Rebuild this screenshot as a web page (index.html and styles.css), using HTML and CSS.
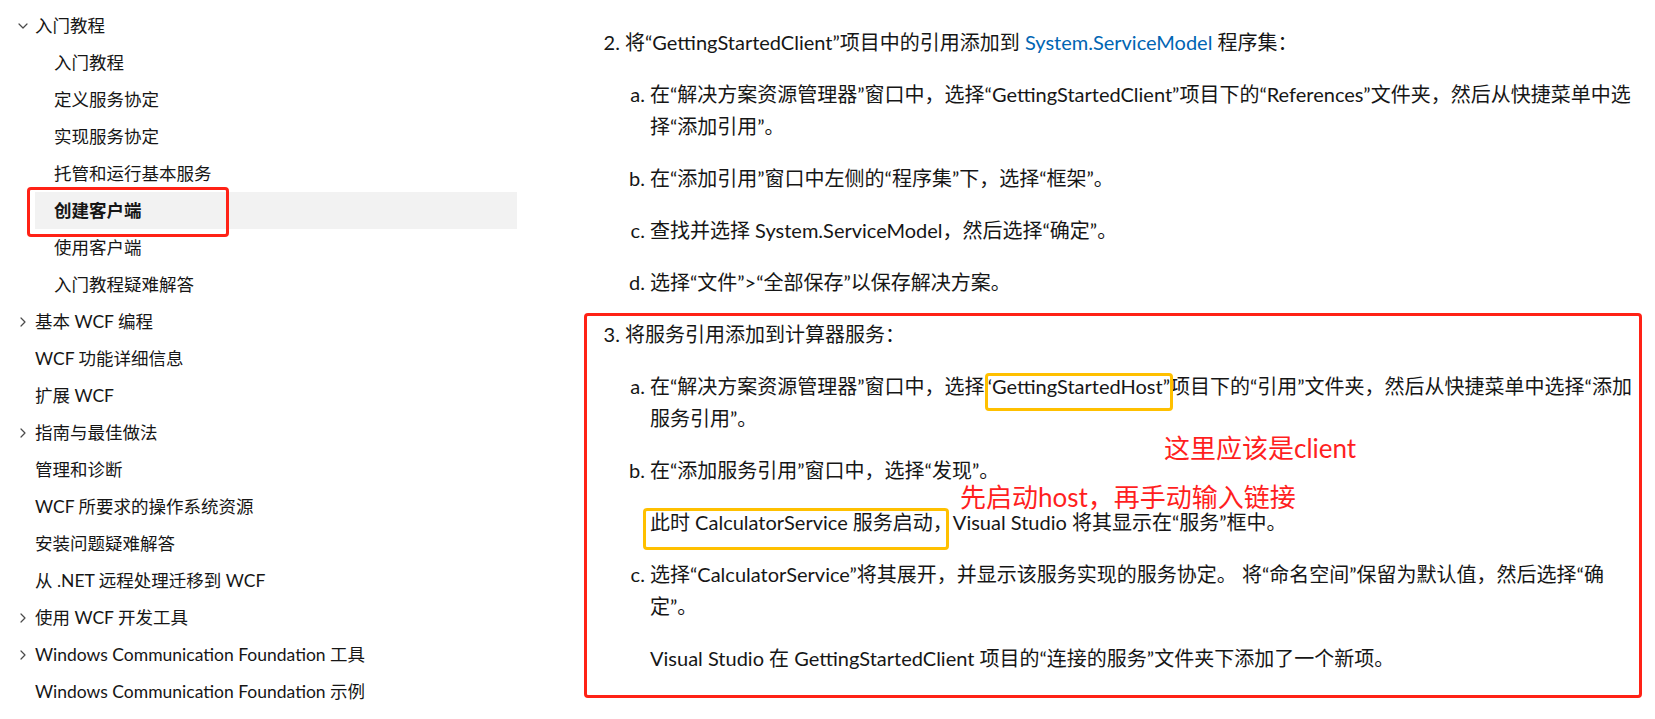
FILE: index.html
```html
<!DOCTYPE html>
<html lang="zh-CN">
<head>
<meta charset="utf-8">
<title>创建客户端</title>
<link rel="stylesheet" href="styles.css">
</head>
<body>
<div class="page">
  <nav class="toc">
    <ul class="toc-list">
      <li class="toc-row toc-top"><span class="chev"><svg width="10" height="10" viewBox="0 0 10 10"><polyline points="1,3 5,7 9,3"/></svg></span><span>入门教程</span></li>
      <li class="toc-row toc-sub">入门教程</li>
      <li class="toc-row toc-sub">定义服务协定</li>
      <li class="toc-row toc-sub">实现服务协定</li>
      <li class="toc-row toc-sub">托管和运行基本服务</li>
      <li class="toc-row toc-sub is-active">创建客户端<span class="mark-red"></span></li>
      <li class="toc-row toc-sub">使用客户端</li>
      <li class="toc-row toc-sub">入门教程疑难解答</li>
      <li class="toc-row toc-top"><span class="chev"><svg width="10" height="10" viewBox="0 0 10 10"><polyline points="3,1 7,5 3,9"/></svg></span><span>基本 WCF 编程</span></li>
      <li class="toc-row toc-top"><span class="chev"></span><span>WCF 功能详细信息</span></li>
      <li class="toc-row toc-top"><span class="chev"></span><span>扩展 WCF</span></li>
      <li class="toc-row toc-top"><span class="chev"><svg width="10" height="10" viewBox="0 0 10 10"><polyline points="3,1 7,5 3,9"/></svg></span><span>指南与最佳做法</span></li>
      <li class="toc-row toc-top"><span class="chev"></span><span>管理和诊断</span></li>
      <li class="toc-row toc-top"><span class="chev"></span><span>WCF 所要求的操作系统资源</span></li>
      <li class="toc-row toc-top"><span class="chev"></span><span>安装问题疑难解答</span></li>
      <li class="toc-row toc-top"><span class="chev"></span><span>从 .NET 远程处理迁移到 WCF</span></li>
      <li class="toc-row toc-top"><span class="chev"><svg width="10" height="10" viewBox="0 0 10 10"><polyline points="3,1 7,5 3,9"/></svg></span><span>使用 WCF 开发工具</span></li>
      <li class="toc-row toc-top"><span class="chev"><svg width="10" height="10" viewBox="0 0 10 10"><polyline points="3,1 7,5 3,9"/></svg></span><span>Windows Communication Foundation 工具</span></li>
      <li class="toc-row toc-top"><span class="chev"></span><span>Windows Communication Foundation 示例</span></li>
    </ul>
  </nav>

  <main class="content">
    <ol class="steps" start="2">
      <li>
        <p>将“GettingStartedClient”项目中的引用添加到 <a class="link" href="#">System.ServiceModel</a> 程序集：</p>
        <ol class="substeps" type="a">
          <li><p>在“解决方案资源管理器”窗口中，选择“GettingStartedClient”项目下的“References”文件夹，然后从快捷菜单中选<br>择“添加引用”。</p></li>
          <li><p>在“添加引用”窗口中左侧的“程序集”下，选择“框架”。</p></li>
          <li><p>查找并选择 System.ServiceModel，然后选择“确定”。</p></li>
          <li><p>选择“文件”&gt;“全部保存”以保存解决方案。</p></li>
        </ol>
      </li>
      <li class="boxed">
        <p>将服务引用添加到计算器服务：</p>
        <ol class="substeps" type="a">
          <li><p>在“解决方案资源管理器”窗口中，选择<span class="hl hl-host">“GettingStartedHost”</span>项目下的“引用”文件夹，然后从快捷菜单中选择“添加<br>服务引用”。</p></li>
          <li>
            <p>在“添加服务引用”窗口中，选择“发现”。</p>
            <p><span class="hl hl-start">此时 CalculatorService 服务启动，</span>Visual Studio 将其显示在“服务”框中。</p>
          </li>
          <li>
            <p>选择“CalculatorService”将其展开，并显示该服务实现的服务协定。 将“命名空间”保留为默认值，然后选择“确<br>定”。</p>
            <p>Visual Studio 在 GettingStartedClient 项目的“连接的服务”文件夹下添加了一个新项。</p>
          </li>
        </ol>
        <span class="note note-client">这里应该是client</span>
        <span class="note note-host">先启动host，再手动输入链接</span>
      </li>
    </ol>
  </main>
</div>
</body>
</html>
```
FILE: styles.css
```css
html, body {
  margin: 0;
  padding: 0;
  background: #ffffff;
}

body {
  font-family: Lato, "Noto Sans CJK SC", sans-serif;
  color: #161616;
  overflow: hidden;
}

.page {
  display: flex;
  width: 1655px;
  height: 719px;
  overflow: hidden;
}

/* ---------- table of contents ---------- */
.toc {
  flex: none;
  width: 517px;
  padding-top: 7px;
}

.toc-list {
  list-style: none;
  margin: 0;
  padding: 0;
}

.toc-row {
  height: 37px;
  line-height: 37px;
  font-size: 17.5px;
  white-space: nowrap;
}

.toc-top {
  display: flex;
  align-items: center;
  padding-left: 16px;
}

.chev {
  flex: none;
  width: 19px;
  height: 37px;
  display: flex;
  align-items: center;
}

.chev svg {
  margin-left: 2px;
  fill: none;
  stroke: #4a4a4a;
  stroke-width: 1.2;
  stroke-linecap: round;
  stroke-linejoin: round;
}

.toc-sub {
  margin-left: 35px;
  padding-left: 19px;
}

.toc-sub.is-active {
  position: relative;
  background: #f2f2f2;
  font-weight: 700;
}

.mark-red {
  position: absolute;
  left: -8px;
  top: -5px;
  width: 202px;
  height: 50px;
  box-sizing: border-box;
  border: 3px solid #ff2216;
  border-radius: 4px;
}

/* ---------- article ---------- */
.content {
  flex: 1;
  padding: 26px 7px 0 108px;
  font-size: 20px;
  line-height: 32px;
}

.content p {
  margin: 0;
}

.content p + p,
.content p + ol {
  margin-top: 20px;
}

.steps {
  margin: 0;
  padding: 0;
}

.steps > li + li {
  margin-top: 20px;
}

.substeps {
  margin: 0;
  padding: 0 0 0 25px;
}

.substeps > li + li {
  margin-top: 20px;
}

.link {
  color: #0065b3;
  text-decoration: none;
}

.boxed {
  position: relative;
}

.boxed::before {
  content: "";
  position: absolute;
  left: -41px;
  top: -5px;
  right: 6px;
  bottom: -24px;
  border: 3.5px solid #ff2216;
  border-radius: 4px;
  pointer-events: none;
}

.hl {
  position: relative;
}

.hl::after {
  content: "";
  position: absolute;
  border: 3px solid #ffc000;
  border-radius: 4px;
  pointer-events: none;
}

.hl-host::after {
  left: 0;
  right: -3px;
  top: -1px;
  bottom: -13px;
}

.hl-start::after {
  left: -7px;
  right: 4px;
  top: -2px;
  bottom: -16px;
}

.note {
  position: absolute;
  font-size: 26px;
  line-height: 26px;
  color: #ff1f1f;
  white-space: nowrap;
}

.note-client {
  left: 539px;
  top: 117px;
}

.note-host {
  left: 335px;
  top: 166px;
}
```
